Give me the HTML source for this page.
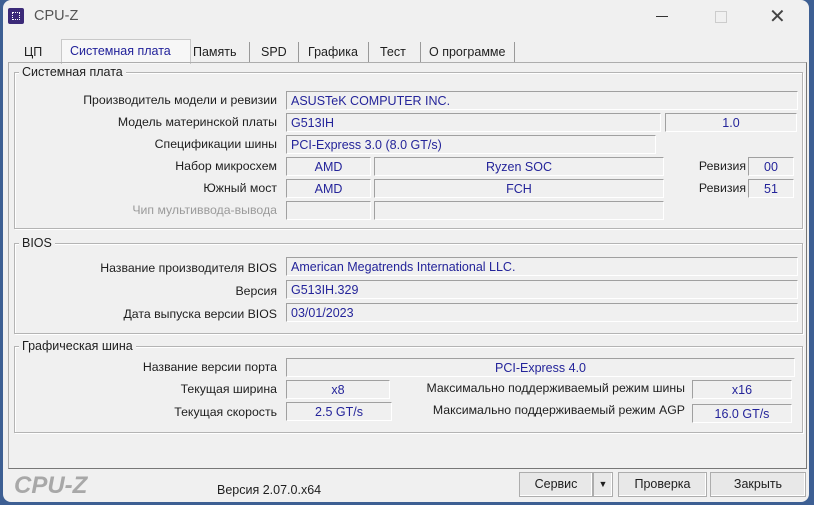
<!DOCTYPE html><html><head><meta charset="utf-8"><style>
body{margin:0;width:814px;height:505px;background:#3d5f93;position:relative;overflow:hidden;font-family:"Liberation Sans","Noto Sans CJK SC",sans-serif;font-size:12.5px;color:#1e1e1e}
.win{position:absolute;left:3px;top:0;width:806px;height:502px;background:#f0f0f0;border-radius:8px;overflow:hidden}
.a{position:absolute;white-space:nowrap}
.box{position:absolute;border-top:1px solid #a0a0a0;border-left:1px solid #a0a0a0;border-bottom:1px solid #fff;border-right:1px solid #fff;color:#24249a;line-height:18px;padding-left:4px;box-sizing:border-box;height:19px}
.c{text-align:center;padding-left:0}
.lbl{position:absolute;text-align:right;white-space:nowrap;line-height:19px;font-size:12.3px}
.grp{position:absolute;border:1px solid #b4b4b4;box-shadow:1px 1px 0 #fff inset,1px 1px 0 #fff}
.gt{position:absolute;background:#f0f0f0;padding:0 3px;line-height:14px}
.btn{position:absolute;top:472px;height:25px;border:1px solid #adadad;background:#e8e8e8;box-sizing:border-box;text-align:center;line-height:23px;box-shadow:-1px -1px 0 #fff inset}
</style></head><body><div class="win">
<div class="a" style="left:5px;top:8px;width:16px;height:16px;background:#3b2a78;border-radius:2px"><div style="margin:4px;width:8px;height:8px;border:1px dotted #fff;box-sizing:border-box"></div></div>
<div class="a" style="left:31px;top:8px;font-size:14.5px;color:#555">CPU-Z</div>
<div class="a" style="left:653px;top:16px;width:12px;height:1px;background:#333"></div>
<div class="a" style="left:712px;top:11px;width:10px;height:10px;border:1px solid #ccc"></div>
<div class="a" style="left:766px;top:4px;font-size:20px;color:#444">✕</div>
<!-- tabs -->
<div class="a" style="left:58px;top:39px;width:128px;height:24px;background:#f7f7f7;border:1px solid #c8c8c8;border-bottom:none"></div>
<div class="a" style="left:21px;top:45px">ЦП</div>
<div class="a" style="left:67px;top:44px;color:#22229a">Системная плата</div>
<div class="a" style="left:190px;top:45px">Память</div>
<div class="a" style="left:246px;top:42px;width:1px;height:20px;background:#999"></div>
<div class="a" style="left:258px;top:45px">SPD</div>
<div class="a" style="left:295px;top:42px;width:1px;height:20px;background:#999"></div>
<div class="a" style="left:305px;top:45px">Графика</div>
<div class="a" style="left:365px;top:42px;width:1px;height:20px;background:#999"></div>
<div class="a" style="left:377px;top:45px">Тест</div>
<div class="a" style="left:417px;top:42px;width:1px;height:20px;background:#999"></div>
<div class="a" style="left:426px;top:45px">О программе</div>
<div class="a" style="left:511px;top:42px;width:1px;height:20px;background:#999"></div>
<div class="a" style="left:5px;top:62px;width:797px;height:405px;border:1px solid #adadad;border-right-color:#777;border-bottom-color:#777"></div>
<!-- group 1 -->
<div class="grp" style="left:11px;top:72px;width:787px;height:155px"></div>
<div class="gt" style="left:16px;top:65px">Системная плата</div>
<div class="lbl" style="right:532px;top:91px">Производитель модели и ревизии</div>
<div class="box" style="left:283px;top:91px;width:512px">ASUSTeK COMPUTER INC.</div>
<div class="lbl" style="right:532px;top:113px">Модель материнской платы</div>
<div class="box" style="left:283px;top:113px;width:375px">G513IH</div>
<div class="box c" style="left:662px;top:113px;width:132px">1.0</div>
<div class="lbl" style="right:532px;top:135px">Спецификации шины</div>
<div class="box" style="left:283px;top:135px;width:370px">PCI-Express 3.0 (8.0 GT/s)</div>
<div class="lbl" style="right:532px;top:157px">Набор микросхем</div>
<div class="box c" style="left:283px;top:157px;width:85px">AMD</div>
<div class="box c" style="left:371px;top:157px;width:290px">Ryzen SOC</div>
<div class="lbl" style="right:63px;top:157px">Ревизия</div>
<div class="box c" style="left:745px;top:157px;width:46px">00</div>
<div class="lbl" style="right:532px;top:179px">Южный мост</div>
<div class="box c" style="left:283px;top:179px;width:85px">AMD</div>
<div class="box c" style="left:371px;top:179px;width:290px">FCH</div>
<div class="lbl" style="right:63px;top:179px">Ревизия</div>
<div class="box c" style="left:745px;top:179px;width:46px">51</div>
<div class="lbl" style="right:532px;top:201px;color:#9a9a9a">Чип мультиввода-вывода</div>
<div class="box" style="left:283px;top:201px;width:85px"></div>
<div class="box" style="left:371px;top:201px;width:290px"></div>
<!-- BIOS -->
<div class="grp" style="left:11px;top:243px;width:787px;height:89px"></div>
<div class="gt" style="left:16px;top:236px">BIOS</div>
<div class="lbl" style="right:532px;top:259px">Название производителя BIOS</div>
<div class="box" style="left:283px;top:257px;width:512px">American Megatrends International LLC.</div>
<div class="lbl" style="right:532px;top:282px">Версия</div>
<div class="box" style="left:283px;top:280px;width:512px">G513IH.329</div>
<div class="lbl" style="right:532px;top:305px">Дата выпуска версии BIOS</div>
<div class="box" style="left:283px;top:303px;width:512px">03/01/2023</div>
<!-- Graphics -->
<div class="grp" style="left:11px;top:346px;width:787px;height:85px"></div>
<div class="gt" style="left:16px;top:339px">Графическая шина</div>
<div class="lbl" style="right:532px;top:358px">Название версии порта</div>
<div class="box c" style="left:283px;top:358px;width:509px">PCI-Express 4.0</div>
<div class="lbl" style="right:532px;top:380px">Текущая ширина</div>
<div class="box c" style="left:283px;top:380px;width:104px">x8</div>
<div class="lbl" style="right:124px;top:379px">Максимально поддерживаемый режим шины</div>
<div class="box c" style="left:689px;top:380px;width:100px">x16</div>
<div class="lbl" style="right:532px;top:403px">Текущая скорость</div>
<div class="box c" style="left:283px;top:402px;width:106px">2.5 GT/s</div>
<div class="lbl" style="right:124px;top:401px">Максимально поддерживаемый режим AGP</div>
<div class="box c" style="left:689px;top:404px;width:100px">16.0 GT/s</div>
<!-- bottom -->
<div class="a" style="left:11px;top:472px;font-size:24px;font-weight:bold;font-style:italic;color:#a8a8a8">CPU-Z</div>
<div class="a" style="left:214px;top:483px">Версия 2.07.0.x64</div>
<div class="btn" style="left:516px;width:74px">Сервис</div>
<div class="btn" style="left:590px;width:20px;font-size:9px">▼</div>
<div class="btn" style="left:615px;width:89px">Проверка</div>
<div class="btn" style="left:707px;width:96px">Закрыть</div>
</div></body></html>
